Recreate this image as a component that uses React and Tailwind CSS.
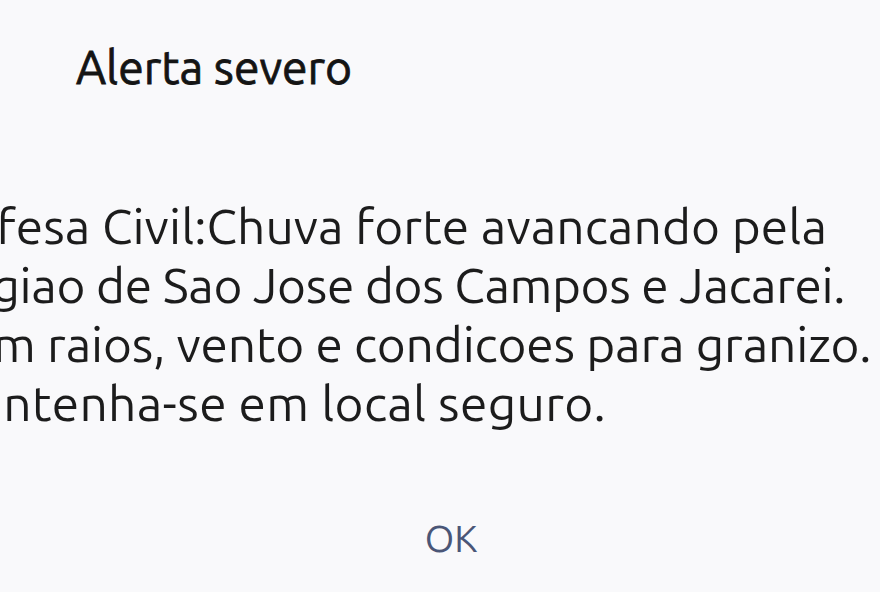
import React from "react";

const lines = [
  { t: "Defesa Civil:Chuva forte avancando pela", c: "tracking-[0.14px]" },
  { t: "Regiao de Sao Jose dos Campos e Jacarei.", c: "tracking-[-0.37px]" },
  { t: "Com raios, vento e condicoes para granizo.", c: "tracking-[-0.12px]" },
  { t: "Mantenha-se em local seguro.", c: "tracking-[0.35px]" },
];

export default function App() {
  return (
    <div className="w-[880px] h-[592px] overflow-hidden bg-[#f9f9fb] flex flex-col font-['Ubuntu','Noto_Sans',sans-serif]">
      <div className="pt-[39px] pl-[76px] text-[46.3px] leading-[56px] font-normal text-[#141414] [-webkit-text-stroke:0.8px_#141414]">
        Alerta severo
      </div>
      <div className="mt-[101px] ml-[-66px] flex flex-col text-[49.6px] leading-[59px] text-[#1c1c1c]">
        {lines.map((l) => (
          <div key={l.t} className={"whitespace-nowrap " + l.c}>
            {l.t}
          </div>
        ))}
      </div>
      <div className="mt-[83px] flex justify-center pl-[22px]">
        <span className="text-[38px] leading-[46px] text-[#4a5677]">OK</span>
      </div>
    </div>
  );
}
